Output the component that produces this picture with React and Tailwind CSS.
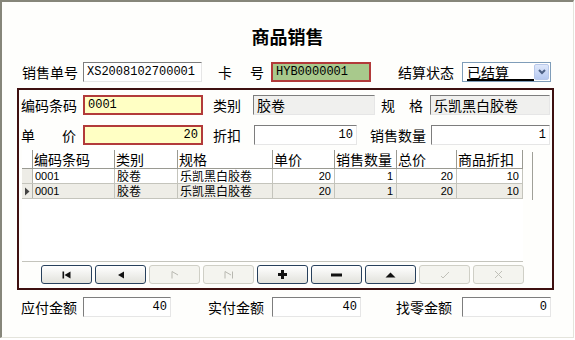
import React from "react";

const cjk = { fontFamily: '"Noto Sans CJK SC", "Noto Sans", sans-serif' };
const mono = { fontFamily: '"Liberation Mono", "DejaVu Sans Mono", monospace' };
const tah = { fontFamily: '"Liberation Sans", "Noto Sans CJK SC", sans-serif' };

const sunken =
  "border border-t-[#7d7d7d] border-l-[#7d7d7d] border-r-[#e6e6e6] border-b-[#e6e6e6]";

function Label({ children, className = "" }) {
  return (
    <div className={"text-[14px] leading-[20px] text-black whitespace-nowrap " + className} style={cjk}>
      {children}
    </div>
  );
}

function Field({ value, className = "", right = false, kind = "white" }) {
  let cls = "h-[20px] flex items-center text-[12px] text-black px-[3px] overflow-hidden ";
  if (kind === "white") cls += sunken + " bg-white";
  if (kind === "gray") cls += sunken + " bg-[#f0f0ee]";
  if (kind === "yellow") cls += "border-2 border-[#b23a3a] bg-[#ffffc4]";
  if (kind === "green") cls += "border-2 border-[#b23a3a] bg-[#a8c98c]";
  if (right) cls += " justify-end";
  const isCjk = /[\u4e00-\u9fff]/.test(value);
  return (
    <div className={cls + " " + className}>
      <span className={isCjk ? "text-[14px]" : ""} style={isCjk ? cjk : mono}>{value}</span>
    </div>
  );
}

function Btn({ disabled, children }) {
  return (
    <div
      className={
        "w-[51px] h-[19px] rounded-[3px] flex items-center justify-center border " +
        (disabled
          ? "border-[#cfcfc6] bg-[#f4f4ef]"
          : "border-[#27405c] bg-gradient-to-b from-white to-[#e2e2dc]")
      }
    >
      {children}
    </div>
  );
}

const cols = [
  { t: "编码条码", w: 82 },
  { t: "类别", w: 63 },
  { t: "规格", w: 95 },
  { t: "单价", w: 62 },
  { t: "销售数量", w: 62 },
  { t: "总价", w: 60 },
  { t: "商品折扣", w: 66 },
];

const row = ["0001", "胶卷", "乐凯黑白胶卷", "20", "1", "20", "10"];

function GridRow({ sel }) {
  return (
    <div className={"flex h-[15px] border-b border-[#c4c4bc] " + (sel ? "bg-[#eeede7]" : "bg-white")}>
      <div className="w-[11px] border-r border-[#b4b4ac] bg-[#edece6] flex items-center justify-center">
        {sel && (
          <svg width="6" height="9" viewBox="0 0 6 9">
            <path d="M1 0.5 L5.5 4.5 L1 8.5 Z" fill="#444" />
          </svg>
        )}
      </div>
      {row.map((v, i) => {
        const num = i >= 3;
        const c = /[\u4e00-\u9fff]/.test(v);
        return (
          <div
            key={i}
            style={{ width: cols[i].w, ...(c ? cjk : tah) }}
            className={
              "border-r border-[#c4c4bc] flex items-center leading-[14px] overflow-hidden whitespace-nowrap " +
              (num ? "justify-end pr-[3px] " : "pl-[2px] ") +
              (c ? "text-[12px]" : "text-[11px]")
            }
          >
            {v}
          </div>
        );
      })}
    </div>
  );
}

export default function App() {
  return (
    <div className="w-[575px] h-[340px] bg-white">
      <div className="w-[574px] h-[338px] border-t-2 border-l-2 border-t-[#86867a] border-l-[#86867a] border-r border-b border-r-[#e4e4dc] border-b-[#e4e4dc] bg-[#fefefc]">
        {/* Title */}
        <div className="pt-[22px] h-[46px] text-center text-[18px] leading-[24px] font-bold text-black" style={cjk}>
          商品销售
        </div>

        {/* Row 1 */}
        <div className="mt-[14px] flex items-center pl-[20px] h-[20px]">
          <Label className="w-[61px]">销售单号</Label>
          <Field value="XS2008102700001" className="w-[119px]" />
          <Label className="ml-[16px] w-[53px]">
            <div className="w-[46px] flex justify-between"><span>卡</span><span>号</span></div>
          </Label>
          <Field value="HYB0000001" kind="green" className="w-[100px]" />
          <Label className="ml-[27px] w-[64px]">结算状态</Label>
          <div className="w-[89px] h-[20px] border border-[#7f9db9] bg-white flex items-center pl-[4px] pr-[1px]">
            <div className="w-[67px] h-[17px] border-b-2 border-black text-[14px] leading-[16px]" style={cjk}>
              已结算
            </div>
            <div className="ml-auto w-[15px] h-[16px] rounded-[2px] bg-gradient-to-b from-[#dfe8fb] to-[#b6c9f1] border border-[#b8c8ea] flex items-center justify-center">
              <svg width="8" height="6" viewBox="0 0 8 6">
                <path d="M1 1 L4 4 L7 1" stroke="#4d6185" strokeWidth="2" fill="none" />
              </svg>
            </div>
          </div>
        </div>

        {/* Panel */}
        <div className="mt-[6px] ml-[15px] w-[537px] h-[202px] border-2 border-[#3e1010]">
          {/* Row 2 */}
          <div className="mt-[5px] flex items-center pl-[2px] h-[20px]">
            <Label className="w-[62px]">编码条码</Label>
            <Field value="0001" kind="yellow" className="w-[120px]" />
            <Label className="ml-[10px] w-[40px]">类别</Label>
            <Field value="胶卷" kind="gray" className="w-[122px]" />
            <Label className="ml-[6px] w-[49px]">
              <div className="w-[42px] flex justify-between"><span>规</span><span>格</span></div>
            </Label>
            <Field value="乐凯黑白胶卷" kind="gray" className="w-[120px]" />
          </div>

          {/* Row 3 */}
          <div className="mt-[10px] flex items-center pl-[2px] h-[20px]">
            <Label className="w-[62px]">
              <div className="w-[55px] flex justify-between"><span>单</span><span>价</span></div>
            </Label>
            <Field value="20" kind="yellow" right className="w-[120px]" />
            <Label className="ml-[10px] w-[41px]">折扣</Label>
            <Field value="10" right className="w-[103px]" />
            <Label className="ml-[13px] w-[61px]">销售数量</Label>
            <Field value="1" right className="w-[119px]" />
          </div>

          {/* Grid */}
          <div className="mt-[5px] ml-[3px] flex h-[112px]">
            <div className="w-[501px] h-[112px] border-b border-[#c4c4bc] bg-white">
              <div className="flex h-[19px] border-b border-[#9a9a92]">
                <div className="w-[11px] border-r border-[#9a9a92]" />
                {cols.map((c) => (
                  <div
                    key={c.t}
                    style={{ width: c.w, ...cjk }}
                    className="border-r border-[#9a9a92] pl-[1px] text-[14px] leading-[18px] whitespace-nowrap overflow-hidden"
                  >
                    {c.t}
                  </div>
                ))}
              </div>
              <GridRow />
              <GridRow sel />
            </div>
            <div className="ml-[9px] mt-[2px] w-px h-[48px] bg-[#a0a098]" />
          </div>

          {/* Buttons */}
          <div className="mt-[3px] ml-[22px] flex gap-[3px]">
            <Btn>
              <svg width="9" height="8" viewBox="0 0 9 8">
                <rect x="0.5" y="0.5" width="1.6" height="7" fill="#111" />
                <path d="M8.5 0.5 L2.5 4 L8.5 7.5 Z" fill="#111" />
              </svg>
            </Btn>
            <Btn>
              <svg width="8" height="8" viewBox="0 0 8 8">
                <path d="M7 0.5 L1 4 L7 7.5 Z" fill="#111" />
              </svg>
            </Btn>
            <Btn disabled>
              <svg width="8" height="8" viewBox="0 0 8 8">
                <path d="M1 0.5 L1 7.5 M1 0.5 L7 4" stroke="#b8b8b0" strokeWidth="1" fill="none" />
              </svg>
            </Btn>
            <Btn disabled>
              <svg width="10" height="8" viewBox="0 0 10 8">
                <path d="M1 0.5 L1 7.5 M1 0.5 L7 4 M8.5 0.5 L8.5 7.5" stroke="#b8b8b0" strokeWidth="1" fill="none" />
              </svg>
            </Btn>
            <Btn>
              <svg width="9" height="9" viewBox="0 0 9 9">
                <path d="M3 0 H6 V3 H9 V6 H6 V9 H3 V6 H0 V3 H3 Z" fill="#111" />
              </svg>
            </Btn>
            <Btn>
              <svg width="11" height="4" viewBox="0 0 11 4">
                <rect x="0" y="0.5" width="11" height="3" fill="#111" />
              </svg>
            </Btn>
            <Btn>
              <svg width="11" height="6" viewBox="0 0 11 6">
                <path d="M0.5 5.5 L5.5 0.5 L10.5 5.5 Z" fill="#111" />
              </svg>
            </Btn>
            <Btn disabled>
              <svg width="10" height="8" viewBox="0 0 10 8">
                <path d="M1 5 L3 7 L9 1" stroke="#c0c0b8" strokeWidth="1" fill="none" />
              </svg>
            </Btn>
            <Btn disabled>
              <svg width="9" height="9" viewBox="0 0 9 9">
                <path d="M1 1 L8 8 M8 1 L1 8" stroke="#c0c0b8" strokeWidth="1" fill="none" />
              </svg>
            </Btn>
          </div>
        </div>

        {/* Bottom row */}
        <div className="mt-[7px] flex items-center pl-[19px] h-[20px]">
          <Label className="w-[62px]">应付金额</Label>
          <Field value="40" right className="w-[88px]" />
          <Label className="ml-[37px] w-[64px]">实付金额</Label>
          <Field value="40" right className="w-[89px]" />
          <Label className="ml-[35px] w-[66px]">找零金额</Label>
          <Field value="0" right className="w-[89px]" />
        </div>
      </div>
    </div>
  );
}
